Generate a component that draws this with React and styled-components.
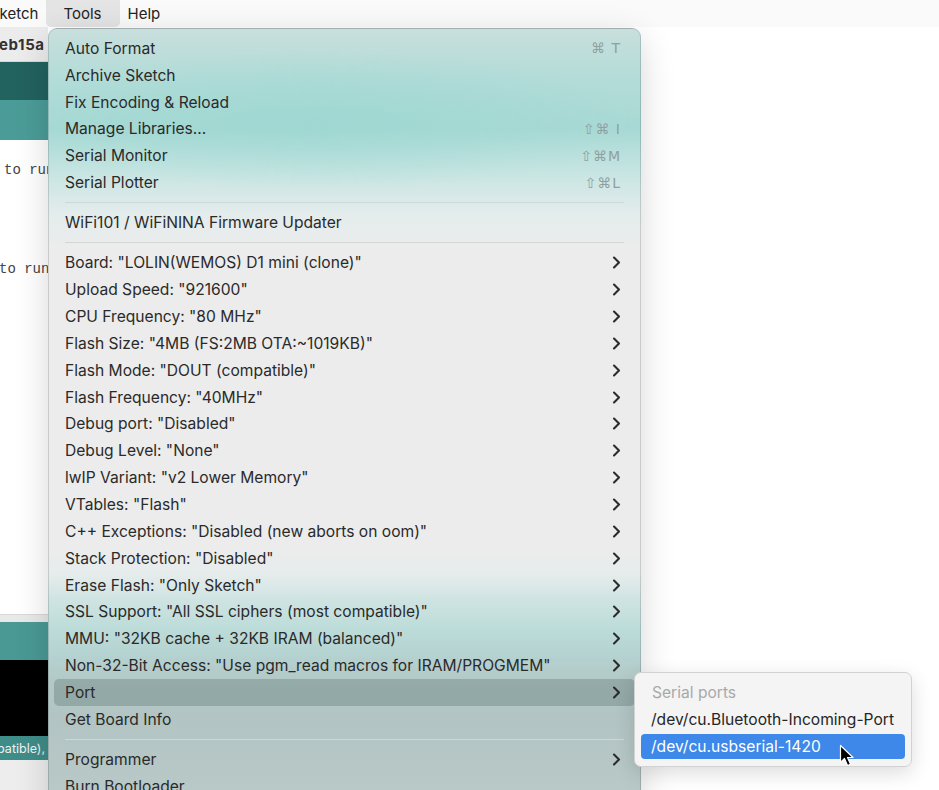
import React from 'react'
import styled, { createGlobalStyle } from 'styled-components'

const GlobalStyle = createGlobalStyle`
  html, body {
    margin: 0;
    padding: 0;
    background: #fff;
  }
  body {
    font-family: Inter, "Liberation Sans", sans-serif;
    -webkit-font-smoothing: antialiased;
  }
`

const menuItems = [
  { label: 'Auto Format', shortcut: '⌘ T' },
  { label: 'Archive Sketch' },
  { label: 'Fix Encoding & Reload' },
  { label: 'Manage Libraries...', shortcut: '⇧⌘ I' },
  { label: 'Serial Monitor', shortcut: '⇧⌘M' },
  { label: 'Serial Plotter', shortcut: '⇧⌘L' },
  { sep: true },
  { label: 'WiFi101 / WiFiNINA Firmware Updater' },
  { sep: true },
  { label: 'Board: "LOLIN(WEMOS) D1 mini (clone)"', sub: true },
  { label: 'Upload Speed: "921600"', sub: true },
  { label: 'CPU Frequency: "80 MHz"', sub: true },
  { label: 'Flash Size: "4MB (FS:2MB OTA:~1019KB)"', sub: true },
  { label: 'Flash Mode: "DOUT (compatible)"', sub: true },
  { label: 'Flash Frequency: "40MHz"', sub: true },
  { label: 'Debug port: "Disabled"', sub: true },
  { label: 'Debug Level: "None"', sub: true },
  { label: 'lwIP Variant: "v2 Lower Memory"', sub: true },
  { label: 'VTables: "Flash"', sub: true },
  { label: 'C++ Exceptions: "Disabled (new aborts on oom)"', sub: true },
  { label: 'Stack Protection: "Disabled"', sub: true },
  { label: 'Erase Flash: "Only Sketch"', sub: true },
  { label: 'SSL Support: "All SSL ciphers (most compatible)"', sub: true },
  { label: 'MMU: "32KB cache + 32KB IRAM (balanced)"', sub: true },
  { label: 'Non-32-Bit Access: "Use pgm_read macros for IRAM/PROGMEM"', sub: true },
  { label: 'Port', sub: true, active: true },
  { label: 'Get Board Info' },
  { sep: true },
  { label: 'Programmer', sub: true },
  { label: 'Burn Bootloader' },
]

const Chevron = () => (
  <svg width="9" height="13" viewBox="0 0 9 13">
    <path d="M2 1.5l5 5-5 5" fill="none" stroke="#2b2b2b" strokeWidth="2.1" strokeLinecap="round" strokeLinejoin="round" />
  </svg>
)

const Pointer = () => (
  <svg width="16" height="24" viewBox="0 0 16 24">
    <path d="M1.5 1.5v17l4-4 3 7 3-1.3-3-6.7h5.5z" fill="#000" stroke="#fff" strokeWidth="1.2" strokeLinejoin="round" />
  </svg>
)

export default function App() {
  return (
    <>
      <GlobalStyle />
      <Screen>
        <MenuBar>
          <MenuTitle $clipped>Sketch</MenuTitle>
          <MenuTitle $open>Tools</MenuTitle>
          <MenuTitle>Help</MenuTitle>
        </MenuBar>

        <Workspace>
          <IdeStrip>
            <FileTab>
              <TabName>eb15a</TabName>
            </FileTab>
            <Toolbar />
            <TabBar />
            <Editor>
              <CodeLine $top={22} $left={4}>to run once:</CodeLine>
              <CodeLine $top={121} $left={-1}>to run repeatedly:</CodeLine>
            </Editor>
            <Splitter />
            <ConsoleHeader />
            <Console />
            <StatusBar>
              <StatusText>DOUT (compatible),</StatusText>
            </StatusBar>
            <Footer />
          </IdeStrip>
        </Workspace>

        <Dropdown>
          {menuItems.map((item, i) =>
            item.sep ? (
              <Separator key={i} />
            ) : (
              <Item key={i} $active={item.active}>
                <span>{item.label}</span>
                {item.shortcut && <Shortcut>{item.shortcut}</Shortcut>}
                {item.sub && <Chevron />}
              </Item>
            )
          )}
        </Dropdown>

        <SubMenu>
          <SubHeader>Serial ports</SubHeader>
          <SubItem>/dev/cu.Bluetooth-Incoming-Port</SubItem>
          <SubItem $selected>/dev/cu.usbserial-1420</SubItem>
        </SubMenu>

        <Cursor>
          <Pointer />
        </Cursor>
      </Screen>
    </>
  )
}

const Screen = styled.div`
  position: relative;
  width: 939px;
  height: 790px;
  overflow: hidden;
  background: #fff;
  display: flex;
  flex-direction: column;
`

const MenuBar = styled.div`
  height: 27px;
  flex: none;
  display: flex;
  align-items: stretch;
  background: #fafafa;
  font-size: 15px;
  color: #232323;
`

const MenuTitle = styled.div`
  display: flex;
  align-items: center;
  padding: ${props => (props.$open ? '0 18px 0 17px' : '0 8px')};
  margin-left: ${props => (props.$clipped ? '-18px' : '0')};
  background: ${props => (props.$open ? '#e4e4e4' : 'transparent')};
  border-radius: 0 0 5px 5px;
`

const Workspace = styled.div`
  flex: 1;
  display: flex;
`

const IdeStrip = styled.div`
  width: 48px;
  display: flex;
  flex-direction: column;
  overflow: hidden;
`

const FileTab = styled.div`
  height: 35px;
  flex: none;
  display: flex;
  align-items: center;
  background: #ececec;
  border-bottom: 1px solid #d6d6d6;
  box-sizing: border-box;
`

const TabName = styled.span`
  margin-left: -1px;
  font-weight: 700;
  font-size: 15px;
  letter-spacing: 0.6px;
  color: #333;
`

const Toolbar = styled.div`
  height: 38px;
  flex: none;
  background: #22625f;
`

const TabBar = styled.div`
  height: 40px;
  flex: none;
  background: #4b9c98;
`

const Editor = styled.div`
  position: relative;
  height: 474px;
  flex: none;
  background: #fff;
`

const CodeLine = styled.div`
  position: absolute;
  top: ${props => props.$top}px;
  left: ${props => props.$left}px;
  white-space: nowrap;
  font-family: "Liberation Mono", monospace;
  font-size: 14px;
  color: #434343;
`

const Splitter = styled.div`
  height: 8px;
  flex: none;
  background: #e9e9e9;
  border-top: 1px solid #d8d8d8;
  box-sizing: border-box;
`

const ConsoleHeader = styled.div`
  height: 38px;
  flex: none;
  background: #4a9995;
`

const Console = styled.div`
  height: 76px;
  flex: none;
  background: #000;
`

const StatusBar = styled.div`
  height: 24px;
  flex: none;
  display: flex;
  align-items: center;
  justify-content: flex-end;
  padding-right: 3px;
  background: #3f8d89;
`

const StatusText = styled.span`
  flex: none;
  white-space: nowrap;
  color: #f2f2f2;
  font-size: 12.5px;
`

const Footer = styled.div`
  flex: 1;
  background: #ededed;
`

const Dropdown = styled.div`
  position: absolute;
  left: 48px;
  top: 28px;
  width: 593px;
  height: 800px;
  box-sizing: border-box;
  padding-top: 6px;
  border-radius: 9px 9px 0 0;
  border: 1px solid rgba(0, 0, 0, 0.14);
  font-size: 15.6px;
  color: #2a2a2a;
  box-shadow: 0 10px 34px rgba(0, 0, 0, 0.16);
  background:
    radial-gradient(ellipse 320px 70px at 45% 90px, rgba(150, 214, 208, 0.55), rgba(150, 214, 208, 0)),
    linear-gradient(
      to bottom,
      #c8dfdd 0px,
      #b3dcd8 50px,
      #a8d9d4 100px,
      #c4e4e1 140px,
      #e4ecec 185px,
      #ececec 220px,
      #ececec 520px,
      #e6ecec 545px,
      #cfe4e2 570px,
      #bcdcd9 600px,
      #b5d3d1 625px,
      #b3c9c7 650px,
      #b2c4c3 690px,
      #b6c7c6 740px,
      #bccbca 800px
    );
`

const Item = styled.div`
  height: 26.85px;
  margin: 0 5px;
  padding: 0 14px 0 11px;
  display: flex;
  align-items: center;
  justify-content: space-between;
  border-radius: 5px;
  white-space: nowrap;
  background: ${props => (props.$active ? 'rgba(70, 92, 90, 0.28)' : 'transparent')};
`

const Shortcut = styled.span`
  color: #8fa09f;
  font-family: "DejaVu Sans", Inter, sans-serif;
  font-size: 14px;
  letter-spacing: 1px;
`

const Separator = styled.div`
  height: 13.3px;
  display: flex;
  align-items: center;
  padding: 0 16px;
  &::after {
    content: '';
    flex: 1;
    height: 1px;
    background: #d2d6d6;
  }
`

const SubMenu = styled.div`
  position: absolute;
  left: 634px;
  top: 672px;
  width: 278px;
  box-sizing: border-box;
  padding: 6px 6px 7px;
  border-radius: 7px;
  background: #f4f4f4;
  border: 1px solid #d2d2d2;
  box-shadow: 0 6px 20px rgba(0, 0, 0, 0.14);
  font-size: 15.6px;
`

const SubHeader = styled.div`
  height: 27px;
  display: flex;
  align-items: center;
  padding-left: 11px;
  color: #a9a9a9;
`

const SubItem = styled.div`
  height: ${props => (props.$selected ? '25px' : '27px')};
  margin-top: ${props => (props.$selected ? '1px' : '0')};
  display: flex;
  align-items: center;
  padding-left: 10px;
  border-radius: 4px;
  white-space: nowrap;
  color: ${props => (props.$selected ? '#fff' : '#262626')};
  background: ${props => (props.$selected ? '#3d88e9' : 'transparent')};
`

const Cursor = styled.div`
  position: absolute;
  left: 839px;
  top: 744px;
  width: 16px;
  height: 24px;
`
